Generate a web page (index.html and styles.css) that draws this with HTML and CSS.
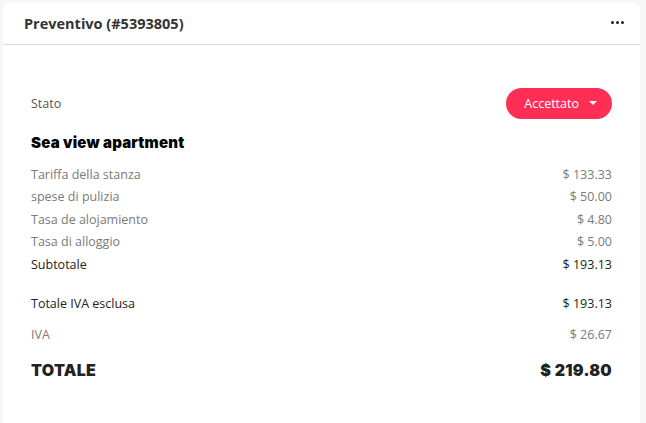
FILE: index.html
```html
<!DOCTYPE html>
<html lang="it">
<head>
<meta charset="utf-8">
<title>Preventivo</title>
<link rel="stylesheet" href="styles.css">
</head>
<body>
<div class="card">
  <div class="card-header">
    <h2 class="title">Preventivo (#5393805)</h2>
    <span class="dots"><i></i><i></i><i></i></span>
  </div>
  <div class="card-body">
    <div class="status-row">
      <span class="label">Stato</span>
      <button class="status-btn">Accettato <span class="caret"></span></button>
    </div>
    <h3 class="section-title">Sea view apartment</h3>
    <div class="rows">
      <div class="row muted"><span>Tariffa della stanza</span><span>$ 133.33</span></div>
      <div class="row muted"><span>spese di pulizia</span><span>$ 50.00</span></div>
      <div class="row muted"><span>Tasa de alojamiento</span><span>$ 4.80</span></div>
      <div class="row muted"><span>Tasa di alloggio</span><span>$ 5.00</span></div>
      <div class="row dark"><span>Subtotale</span><span>$ 193.13</span></div>
    </div>
    <div class="row dark net"><span>Totale IVA esclusa</span><span>$ 193.13</span></div>
    <div class="row muted vat"><span>IVA</span><span>$ 26.67</span></div>
    <div class="row total"><span>TOTALE</span><span>$ 219.80</span></div>
  </div>
</div>
</body>
</html>
```
FILE: styles.css
```css
html, body {
  margin: 0;
  padding: 0;
  background: #f7f7f7;
  font-family: "Open Sans", "Liberation Sans", sans-serif;
}
body {
  padding: 3px 6px 0 3px;
  height: 423px;
  box-sizing: border-box;
}
.card {
  background: #fff;
  border-radius: 6px 6px 0 0;
  height: 100%;
}
.card-header {
  height: 41px;
  border-bottom: 1px solid #d9d9d9;
  display: flex;
  align-items: center;
  justify-content: space-between;
  padding: 0 16px 0 21px;
}
.title {
  margin: 0;
  font-size: 14.5px;
  font-weight: 700;
  color: #333;
}
.dots {
  display: flex;
  gap: 2px;
  padding-bottom: 2px;
}
.dots i {
  width: 3px;
  height: 3px;
  background: #222;
  border-radius: 50%;
}
.card-body {
  padding: 42px 28px 0 28px;
}
.status-row {
  display: flex;
  align-items: center;
  justify-content: space-between;
  height: 32px;
}
.label {
  font-size: 12.5px;
  color: #555;
}
.status-btn {
  background: #ff2e54;
  color: #fff;
  border: none;
  border-radius: 16px;
  height: 31px;
  padding: 0 15px 0 18px;
  font-family: inherit;
  font-size: 12.5px;
  display: flex;
  align-items: center;
  gap: 10px;
}
.caret {
  width: 0;
  height: 0;
  border-left: 4px solid transparent;
  border-right: 4px solid transparent;
  border-top: 4px solid #fff;
}
.section-title {
  margin: 14px 0 11px;
  font-family: "Inter", sans-serif;
  font-weight: 900;
  font-size: 15px;
  color: #000;
  letter-spacing: 0.2px;
}
.row {
  display: flex;
  justify-content: space-between;
  align-items: center;
  height: 22.5px;
  font-size: 12.5px;
}
.muted { color: #7a7a7a; }
.dark { color: #222; }
.net { margin-top: 17px; }
.vat { margin-top: 8px; }
.total {
  margin-top: 12px;
  font-family: "Inter", sans-serif;
  font-weight: 900;
  font-size: 16px;
  color: #222;
  height: 24px;
  letter-spacing: 0.3px;
}
```
